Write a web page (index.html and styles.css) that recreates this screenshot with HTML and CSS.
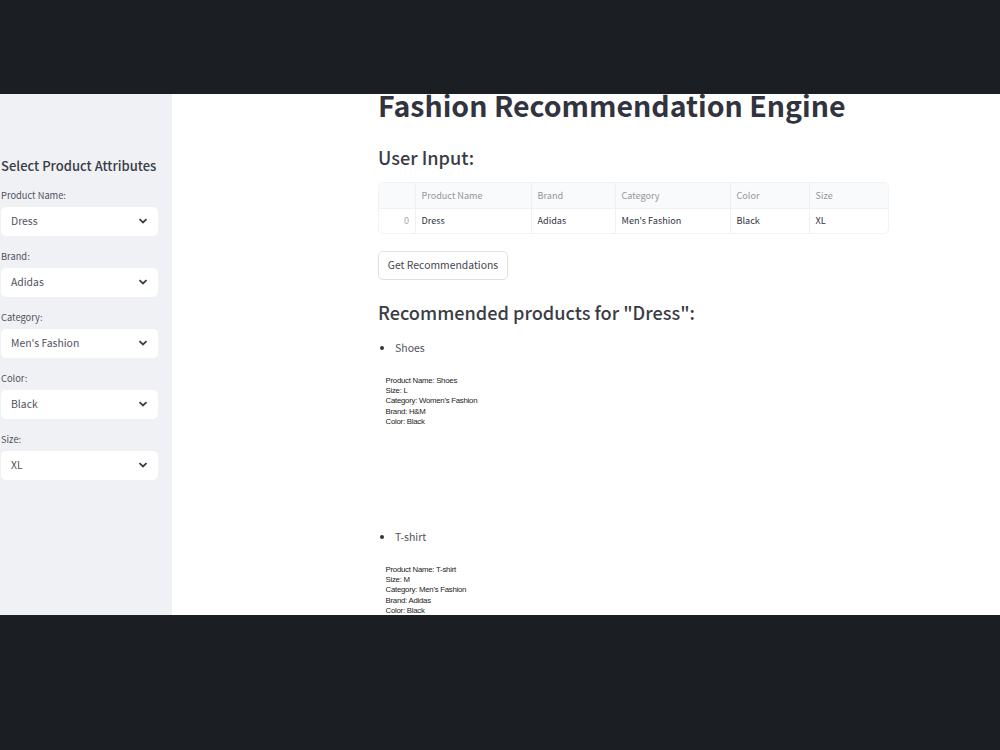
FILE: index.html
```
<!DOCTYPE html>
<html lang="en">
<head>
    <meta charset="UTF-8">
    <meta name="viewport" content="width=device-width, initial-scale=1.0">
    <title>Fashion Recommendation Engine</title>
    <link rel="stylesheet" href="styles.css">
</head>
<body>
    <div class="app">
        <aside class="sidebar">
            <h3>Select Product Attributes</h3>
            <div class="field">
                <label>Product Name:</label>
                <div class="select"><span>Dress</span><svg viewBox="0 0 10 8"><path d="M1.5 2.2 5 5.5 8.5 2.2"/></svg></div>
            </div>
            <div class="field">
                <label>Brand:</label>
                <div class="select"><span>Adidas</span><svg viewBox="0 0 10 8"><path d="M1.5 2.2 5 5.5 8.5 2.2"/></svg></div>
            </div>
            <div class="field">
                <label>Category:</label>
                <div class="select"><span>Men's Fashion</span><svg viewBox="0 0 10 8"><path d="M1.5 2.2 5 5.5 8.5 2.2"/></svg></div>
            </div>
            <div class="field">
                <label>Color:</label>
                <div class="select"><span>Black</span><svg viewBox="0 0 10 8"><path d="M1.5 2.2 5 5.5 8.5 2.2"/></svg></div>
            </div>
            <div class="field">
                <label>Size:</label>
                <div class="select"><span>XL</span><svg viewBox="0 0 10 8"><path d="M1.5 2.2 5 5.5 8.5 2.2"/></svg></div>
            </div>
        </aside>

        <main class="content">
            <h1>Fashion Recommendation Engine</h1>
            <h2 class="input-title">User Input:</h2>
            <div class="table">
                <div class="row head">
                    <span></span><span>Product Name</span><span>Brand</span><span>Category</span><span>Color</span><span>Size</span>
                </div>
                <div class="row">
                    <span class="index">0</span><span>Dress</span><span>Adidas</span><span>Men's Fashion</span><span>Black</span><span>XL</span>
                </div>
            </div>
            <button class="recommend">Get Recommendations</button>
            <h2 class="result-title">Recommended products for "Dress":</h2>
            <div class="product">
                <div class="product-name">Shoes</div>
                <div class="details">
                    <p>Product Name: Shoes</p>
                    <p>Size: L</p>
                    <p>Category: Women's Fashion</p>
                    <p>Brand: H&amp;M</p>
                    <p>Color: Black</p>
                </div>
            </div>
            <div class="product">
                <div class="product-name">T-shirt</div>
                <div class="details">
                    <p>Product Name: T-shirt</p>
                    <p>Size: M</p>
                    <p>Category: Men's Fashion</p>
                    <p>Brand: Adidas</p>
                    <p>Color: Black</p>
                </div>
            </div>
        </main>
    </div>
</body>
</html>
```
FILE: styles.css
```
* {
    box-sizing: border-box;
}
body {
    margin: 0;
    height: 750px;
    padding-top: 94px;
    overflow: hidden;
    background-color: #1b1f24;
    color: #31333f;
    font-family: "Noto Sans CJK SC", "Noto Sans", sans-serif;
}
h1, h2, h3, p {
    margin: 0;
    white-space: nowrap;
}
.app {
    display: flex;
    height: 521px;
    overflow: hidden;
    background-color: white;
}

/* Sidebar */
.sidebar {
    width: 172px;
    flex-shrink: 0;
    padding: 62px 14px 0 1px;
    background-color: #f0f1f5;
}
.sidebar h3 {
    height: 20px;
    margin-bottom: 11px;
    font-size: 13px;
    line-height: 20px;
    font-weight: 500;
    color: #3a3c45;
}
.field {
    height: 61px;
}
.field label {
    display: block;
    height: 16px;
    margin-bottom: 4px;
    font-size: 9.3px;
    line-height: 16px;
    color: #50525b;
}
.select {
    display: flex;
    align-items: center;
    justify-content: space-between;
    height: 29px;
    padding: 0 10px 1px;
    border-radius: 5px;
    background-color: white;
    font-size: 10.4px;
    line-height: 26px;
    color: #50525b;
}
.select svg {
    width: 10px;
    height: 8px;
    fill: none;
    stroke: #3c3e45;
    stroke-width: 1.8;
}

/* Main column */
.content {
    width: 511px;
    margin-left: 206px;
}
h1 {
    height: 30px;
    font-size: 28.5px;
    line-height: 21px;
    font-weight: 700;
}
h2 {
    font-size: 18.15px;
    line-height: 26px;
    font-weight: 500;
    color: #3a3c45;
}
.input-title {
    height: 28px;
    margin: 20px 0 10px;
}
.table {
    border: 1px solid #f2f3f4;
    border-radius: 5px;
    overflow: hidden;
}
.row {
    display: grid;
    grid-template-columns: 37px 116px 84px 115px 79px 1fr;
    height: 24px;
    font-size: 9.1px;
    line-height: 23px;
}
.row span {
    padding-left: 5.5px;
    border-right: 1px solid #eff0f2;
}
.row span:last-child {
    border-right: none;
}
.head {
    height: 26px;
    line-height: 24px;
    border-bottom: 1px solid #f0f1f3;
    background-color: #f9fafb;
    color: #94969c;
}
.row .index {
    padding-right: 6px;
    text-align: right;
    color: #a5a7ac;
}
.recommend {
    display: block;
    width: 130px;
    height: 29px;
    margin: 17px 0 19px;
    padding: 0 0 2px;
    border: 1px solid #dfe0e3;
    border-radius: 5px;
    background-color: white;
    color: #44464f;
    font-family: inherit;
    font-size: 10.4px;
    line-height: 24px;
}
.result-title {
    height: 28px;
    margin-bottom: 11px;
}
.product {
    height: 189px;
}
.product-name {
    display: flex;
    align-items: center;
    height: 20px;
    font-size: 10.5px;
    line-height: 20px;
    color: #50525b;
}
.product-name::before {
    content: "";
    width: 4px;
    height: 4px;
    margin: 0 11px 0 2px;
    border-radius: 50%;
    background-color: #31333f;
}
.details {
    padding: 18px 0 0 7.5px;
    font-family: "Liberation Sans", Arial, sans-serif;
    font-size: 7.8px;
    line-height: 10.2px;
    letter-spacing: -0.25px;
    color: #222;
}
```
